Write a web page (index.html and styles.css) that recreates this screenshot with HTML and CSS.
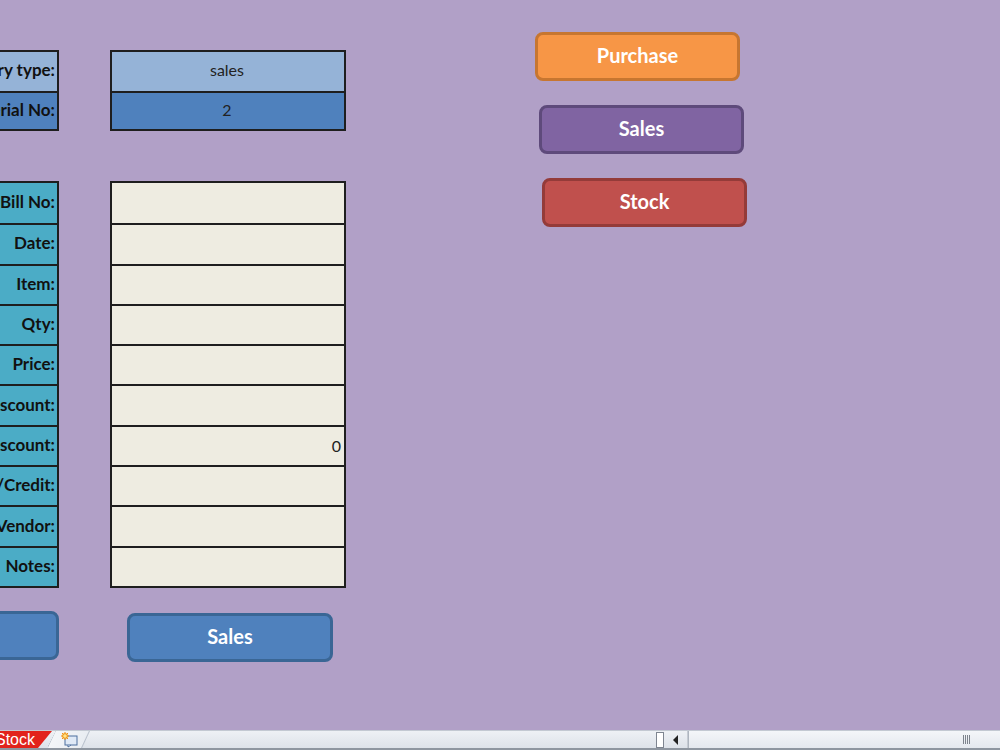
FILE: index.html
```html
<!DOCTYPE html>
<html lang="en">
<head>
  <meta charset="UTF-8">
  <title>Sales Entry</title>
  <link rel="stylesheet" href="styles.css">
</head>
<body>
  <div class="sheet">
    <div class="form">
      <div class="col labels">
        <div class="grid head">
          <div class="cell light"><span>Entry type:</span></div>
          <div class="cell dark"><span>Serial No:</span></div>
        </div>
        <div class="grid data">
          <div class="cell teal"><span>Bill No:</span></div>
          <div class="cell teal"><span>Date:</span></div>
          <div class="cell teal"><span>Item:</span></div>
          <div class="cell teal"><span>Qty:</span></div>
          <div class="cell teal"><span>Price:</span></div>
          <div class="cell teal"><span>Discount:</span></div>
          <div class="cell teal"><span>Net Discount:</span></div>
          <div class="cell teal"><span>Cash/Credit:</span></div>
          <div class="cell teal"><span>Customer/Vendor:</span></div>
          <div class="cell teal"><span>Notes:</span></div>
        </div>
        <div class="btn-row left">
          <div class="btn blue wide">Purchase</div>
        </div>
      </div>
      <div class="col values">
        <div class="grid head">
          <div class="cell light center">sales</div>
          <div class="cell dark center">2</div>
        </div>
        <div class="grid data">
          <div class="cell cream"></div>
          <div class="cell cream"></div>
          <div class="cell cream"></div>
          <div class="cell cream"></div>
          <div class="cell cream"></div>
          <div class="cell cream"></div>
          <div class="cell cream num">0</div>
          <div class="cell cream"></div>
          <div class="cell cream"></div>
          <div class="cell cream"></div>
        </div>
        <div class="btn-row">
          <div class="btn blue save">Sales</div>
        </div>
      </div>
    </div>
    <div class="menu">
      <div class="btn orange">Purchase</div>
      <div class="btn purple">Sales</div>
      <div class="btn red">Stock</div>
    </div>
  </div>
  <div class="tabbar">
    <div class="tabs">
      <div class="tab active"><span>Stock</span></div>
      <div class="tab add">
        <svg width="20" height="16" viewBox="0 0 20 16">
          <rect x="5" y="4" width="12" height="9" fill="#dfe9f6" stroke="#4c6f9e"/>
          <path d="M8 13 L8 15 L11 13" fill="#dfe9f6" stroke="#4c6f9e"/>
          <circle cx="5" cy="4" r="3" fill="#f5b533"/>
          <path d="M5 0 V8 M1 4 H9 M2 1 L8 7 M8 1 L2 7" stroke="#f08c1c" stroke-width="1"/>
          <circle cx="5" cy="4" r="1.8" fill="#ffe38a"/>
        </svg>
      </div>
    </div>
    <div class="hscroll">
      <div class="split"></div>
      <div class="arrow">
        <svg width="8" height="10" viewBox="0 0 8 10"><path d="M6 0 L1 5 L6 10 Z" fill="#222"/></svg>
      </div>
      <div class="track">
        <div class="grip"><i></i><i></i><i></i><i></i></div>
      </div>
    </div>
  </div>
</body>
</html>
```

FILE: styles.css
```css
html, body {
  margin: 0;
  height: 100%;
}
body {
  display: flex;
  flex-direction: column;
  width: 1000px;
  height: 750px;
  overflow: hidden;
  background: #b1a0c7;
  font-family: Lato, "Open Sans", sans-serif;
  color: #111;
}
.sheet {
  display: flex;
  align-items: flex-start;
  height: 730px;
  box-sizing: border-box;
  padding-top: 50px;
}
.form {
  display: flex;
  gap: 51px;
}
.col {
  display: flex;
  flex-direction: column;
}
.labels {
  width: 59px;
  overflow: hidden;
}
.values {
  width: 236px;
}
.grid {
  display: grid;
  border: 2px solid #1e1e1e;
  box-sizing: border-box;
}
.labels .grid {
  border-left: none;
}
.head {
  height: 81px;
  grid-template-rows: repeat(2, 1fr);
}
.data {
  height: 407px;
  margin-top: 50px;
  grid-template-rows: repeat(10, 1fr);
}
.cell {
  display: flex;
  align-items: center;
  justify-content: flex-end;
  padding: 0 2px 3px 0;
  overflow: hidden;
  white-space: nowrap;
  font-size: 17px;
  font-weight: bold;
}
.cell + .cell {
  border-top: 2px solid #1e1e1e;
}
.values .cell {
  font-weight: normal;
  font-size: 16px;
  color: #222;
}
.cell.center {
  justify-content: center;
}
.cell.num {
  padding: 0 3px 1px 0;
}
.light { background: #95b3d7; }
.dark { background: #4f81bd; }
.teal { background: #4bacc6; }
.cream { background: #eeece1; }

.btn {
  display: flex;
  align-items: center;
  justify-content: center;
  height: 49px;
  box-sizing: border-box;
  padding-bottom: 4px;
  border: 3px solid;
  border-radius: 8px;
  color: #fff;
  font-size: 20px;
  font-weight: bold;
  white-space: nowrap;
}
.btn-row {
  display: flex;
  margin-top: 23px;
}
.btn-row.left {
  justify-content: flex-end;
}
.btn.wide {
  flex: 0 0 206px;
}
.btn.save {
  width: 206px;
  margin-top: 2px;
  margin-left: 17px;
}
.blue {
  background: #4f81bd;
  border-color: #3a6695;
}
.menu {
  display: flex;
  flex-direction: column;
  gap: 24px;
  margin-left: 189px;
  margin-top: -18px;
}
.menu .btn {
  width: 205px;
}
.orange {
  background: #f79646;
  border-color: #c77630;
}
.purple {
  background: #8064a2;
  border-color: #5e4a7b;
  margin-left: 4px;
}
.red {
  background: #c0504d;
  border-color: #943b39;
  margin-left: 7px;
}

.tabbar {
  display: flex;
  height: 20px;
  box-sizing: border-box;
  border-top: 1px solid #c3c9d2;
  border-bottom: 2px solid #8e96a0;
  background: linear-gradient(#eef1f5, #dde2e9);
}
.tabs {
  display: flex;
  width: 655px;
}
.tab {
  display: flex;
  align-items: center;
  height: 100%;
}
.tab.active {
  width: 52px;
  background: #e2231c;
  clip-path: polygon(0 0, 100% 0, 38px 100%, 0 100%);
  justify-content: flex-end;
  padding-right: 17px;
  box-sizing: border-box;
  overflow: hidden;
}
.tab.active span {
  color: #fff;
  font-family: "Liberation Sans", Arial, sans-serif;
  font-size: 16px;
}
.tab.add {
  width: 56px;
  margin-left: -10px;
  justify-content: center;
  background: linear-gradient(115deg, transparent 12px, #b9c1cc 12px, #f3f5f8 13px, #e9edf2 42px, #b9c1cc 43px, transparent 44px);
}
.hscroll {
  display: flex;
  flex: 1;
  height: 100%;
}
.split {
  width: 6px;
  margin: 1px 1px 0 1px;
  border: 1px solid #7e8590;
  background: #fff;
  height: 14px;
}
.arrow {
  display: flex;
  align-items: center;
  justify-content: center;
  width: 22px;
  border-right: 1px solid #c5cbd3;
}
.track {
  display: flex;
  flex: 1;
  justify-content: flex-end;
  align-items: center;
  background: linear-gradient(#f4f6f9, #e4e8ee);
  border-left: 1px solid #aeb5bf;
  padding-right: 30px;
}
.grip {
  display: flex;
  gap: 1px;
}
.grip i {
  width: 1px;
  height: 9px;
  background: #7d838c;
}
```
